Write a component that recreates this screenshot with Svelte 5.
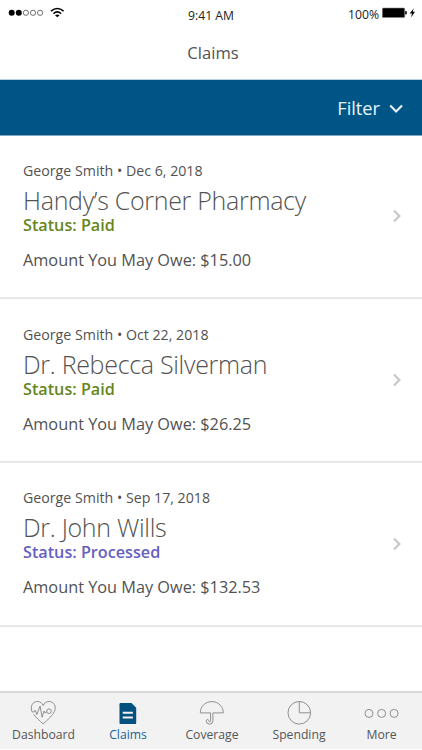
<script>
  const claims = [
    { member: 'George Smith', date: 'Dec 6, 2018', provider: 'Handy’s Corner Pharmacy', status: 'Paid', owed: '$15.00' },
    { member: 'George Smith', date: 'Oct 22, 2018', provider: 'Dr. Rebecca Silverman', status: 'Paid', owed: '$26.25' },
    { member: 'George Smith', date: 'Sep 17, 2018', provider: 'Dr. John Wills', status: 'Processed', owed: '$132.53' },
  ];

  const tabs = ['Dashboard', 'Claims', 'Coverage', 'Spending', 'More'];

  let active = $state('Claims');
</script>

<div class="screen">
  <div class="statusbar">
    <div class="signal">
      <svg width="57" height="12" viewBox="0 0 57 12">
        {#each [0, 1, 2, 3, 4] as i}
          <circle cx={3.7 + i * 7.1} cy="5.8" r={i < 2 ? 3 : 2.6} fill={i < 2 ? '#000' : 'none'} stroke={i < 2 ? 'none' : '#333'} stroke-width=".7" />
        {/each}
        <g fill="none" stroke="#000" stroke-width="1.6">
          <path d="M43 4.1Q49.3-1.1 55.6 4.1" />
          <path d="M45.5 6.6Q49.3 3.3 53.1 6.6" />
        </g>
        <path d="M47 8.2Q49.3 6.6 51.6 8.2L49.3 10.3Z" />
      </svg>
    </div>
    <span class="time">9:41 AM</span>
    <div class="power">
      <span class="percent">100%</span>
      <svg width="35" height="12" viewBox="0 0 35 12">
        <rect x=".3" y="1" width="22.4" height="9.6" rx="1.2" fill="#000" stroke="#888" stroke-width=".6" />
        <path d="M23.2 4h.6a1 1 0 0 1 1 1v1.6a1 1 0 0 1-1 1h-.6z" />
        <path d="M31.800 1.200 27.700 6.400h2.300l-1 4 4-5.600h-2.300z" />
      </svg>
    </div>
  </div>

  <header class="title">Claims</header>

  <div class="filter">
    <span>Filter</span>
    <svg width="16" height="12" viewBox="0 0 16 12">
      <path d="m2.200 3.400 5.900 6 5.900-6" fill="none" stroke="#e3f1f8" stroke-width="2.200" />
    </svg>
  </div>

  <main class="claims">
    {#each claims as claim}
      <article class="claim">
        <div class="body">
          <div class="meta">{claim.member} • {claim.date}</div>
          <h2 class="provider">{claim.provider}</h2>
          <div class="status {claim.status.toLowerCase()}">Status: {claim.status}</div>
          <div class="owed">Amount You May Owe: {claim.owed}</div>
        </div>
        <svg class="chevron" width="10" height="14" viewBox="0 0 10 14">
          <path d="m2 1.500 5.400 5.500L2 12.500" fill="none" stroke="#c8c8c8" stroke-width="2.200" />
        </svg>
      </article>
    {/each}
  </main>

  <nav class="tabs">
    {#each tabs as tab}
      <button class="tab" class:active={active === tab} onclick={() => (active = tab)}>
        <svg width="36" height="26" viewBox="0 0 36 26" fill="none" stroke="#8f8f8f" stroke-width="1">
          {#if tab === 'Dashboard'}
            <path d="M6.200 12C3.800 6.500 6.500 1.500 11.300 1.500c3 0 5 1.700 5.900 4.100.9-2.400 2.900-4.100 5.900-4.100 4.700 0 7.600 4.800 5.400 9.800-2 4.500-7 8.700-11.300 12.600-3.600-3.200-7.100-6.200-9.600-9.700" />
            <path d="M6.200 12h1.600l1.400-1.800 1.700 4.300 3.200-8.500 2 11.300 2-6.300 1.200 2.200 1.400-2" />
            <circle cx="23" cy="11.200" r="2.300" />
          {:else if tab === 'Claims'}
            <path d="M10.700 3h10.800l4.700 4.700v15.200a1.200 1.200 0 0 1-1.200 1.200H10.700a1.200 1.200 0 0 1-1.200-1.200V4.200A1.200 1.200 0 0 1 10.700 3z" fill="#04507f" stroke="none" />
            <path d="M12.700 12.700h10.200M12.700 17.400h10.200" stroke="#f3f3f3" stroke-width="2" />
          {:else if tab === 'Coverage'}
            <path d="M6.300 12.900C6.300 6.500 11.300 1.600 17.800 1.600S29.300 6.500 29.300 12.900H18.900v8a3.300 3.300 0 0 1-6.600 0c0-2 2.500-2 2.500 0 0 1.200 1.800 1.200 1.800 0v-8z" />
          {:else if tab === 'Spending'}
            <circle cx="18.300" cy="12.800" r="11.300" />
            <path d="M18.300 1.500v11.300h11.300" />
          {:else}
            <circle cx="5" cy="13.400" r="4" />
            <circle cx="17.600" cy="13.400" r="4" />
            <circle cx="30.100" cy="13.400" r="4" />
          {/if}
        </svg>
        <span>{tab}</span>
      </button>
    {/each}
  </nav>
</div>

<style>
  :global(body) {
    background: #fff;
  }

  .screen {
    display: flex;
    flex-direction: column;
    width: 422px;
    height: 750px;
    overflow: hidden;
    background: #fff;
    color: #525252;
    font-family: 'Open Sans', 'Noto Sans', sans-serif;
  }

  svg {
    display: block;
    flex-shrink: 0;
  }

  .statusbar {
    display: grid;
    grid-template-columns: 1fr auto 1fr;
    height: 28px;
    padding: 7px 5px 0 8px;
    box-sizing: border-box;
    color: #222;
    font-size: 12.200px;
    line-height: 16px;
  }

  .time {
    padding: 1px 3px 0 0;
  }

  .power {
    display: flex;
    justify-content: flex-end;
    gap: 3px;
  }

  .title {
    height: 51px;
    border-bottom: 1px solid #b5d2e2;
    padding-left: 4px;
    font-size: 16.600px;
    line-height: 50px;
    text-align: center;
  }

  .filter {
    display: flex;
    align-items: center;
    justify-content: flex-end;
    gap: 8px;
    height: 55px;
    padding-right: 18px;
    border-bottom: 1px solid #7fa9c2;
    background: #005587;
    color: #e8f4fb;
    font-size: 18.200px;
  }

  /* claim rows */
  .claims {
    flex: 1;
    margin-top: -0.7px;
  }

  .claim {
    display: flex;
    align-items: center;
    justify-content: space-between;
    height: 161.8px;
    padding: 0 20px 0 23px;
    border-bottom: 2px solid #e7e7e7;
  }

  .meta {
    font-size: 14.200px;
    line-height: 20px;
  }

  .provider {
    margin: 2px 0 0;
    font-size: 25px;
    font-weight: 300;
    line-height: 34px;
    letter-spacing: -0.3px;
  }

  .status {
    margin-top: -1px;
    font-size: 16.200px;
    font-weight: 600;
    line-height: 18px;
  }

  .paid {
    color: #66861d;
  }

  .processed {
    color: #6560bf;
  }

  .owed {
    margin-top: 14px;
    font-size: 16.300px;
    line-height: 24px;
  }

  /* bottom navigation */
  .tabs {
    display: grid;
    grid-template-columns: 87px 82px 86px 88px 77px;
    height: 56px;
    margin-bottom: 1px;
    border-top: 2px solid #d8d8d8;
    background: #f2f2f2;
  }

  .tab {
    display: flex;
    flex-direction: column;
    align-items: center;
    padding: 7px 0 0;
    border: 0;
    background: none;
    color: #555;
    font: 12.200px/18px 'Open Sans', 'Noto Sans', sans-serif;
  }

  .active {
    color: #1d6295;
  }
</style>
